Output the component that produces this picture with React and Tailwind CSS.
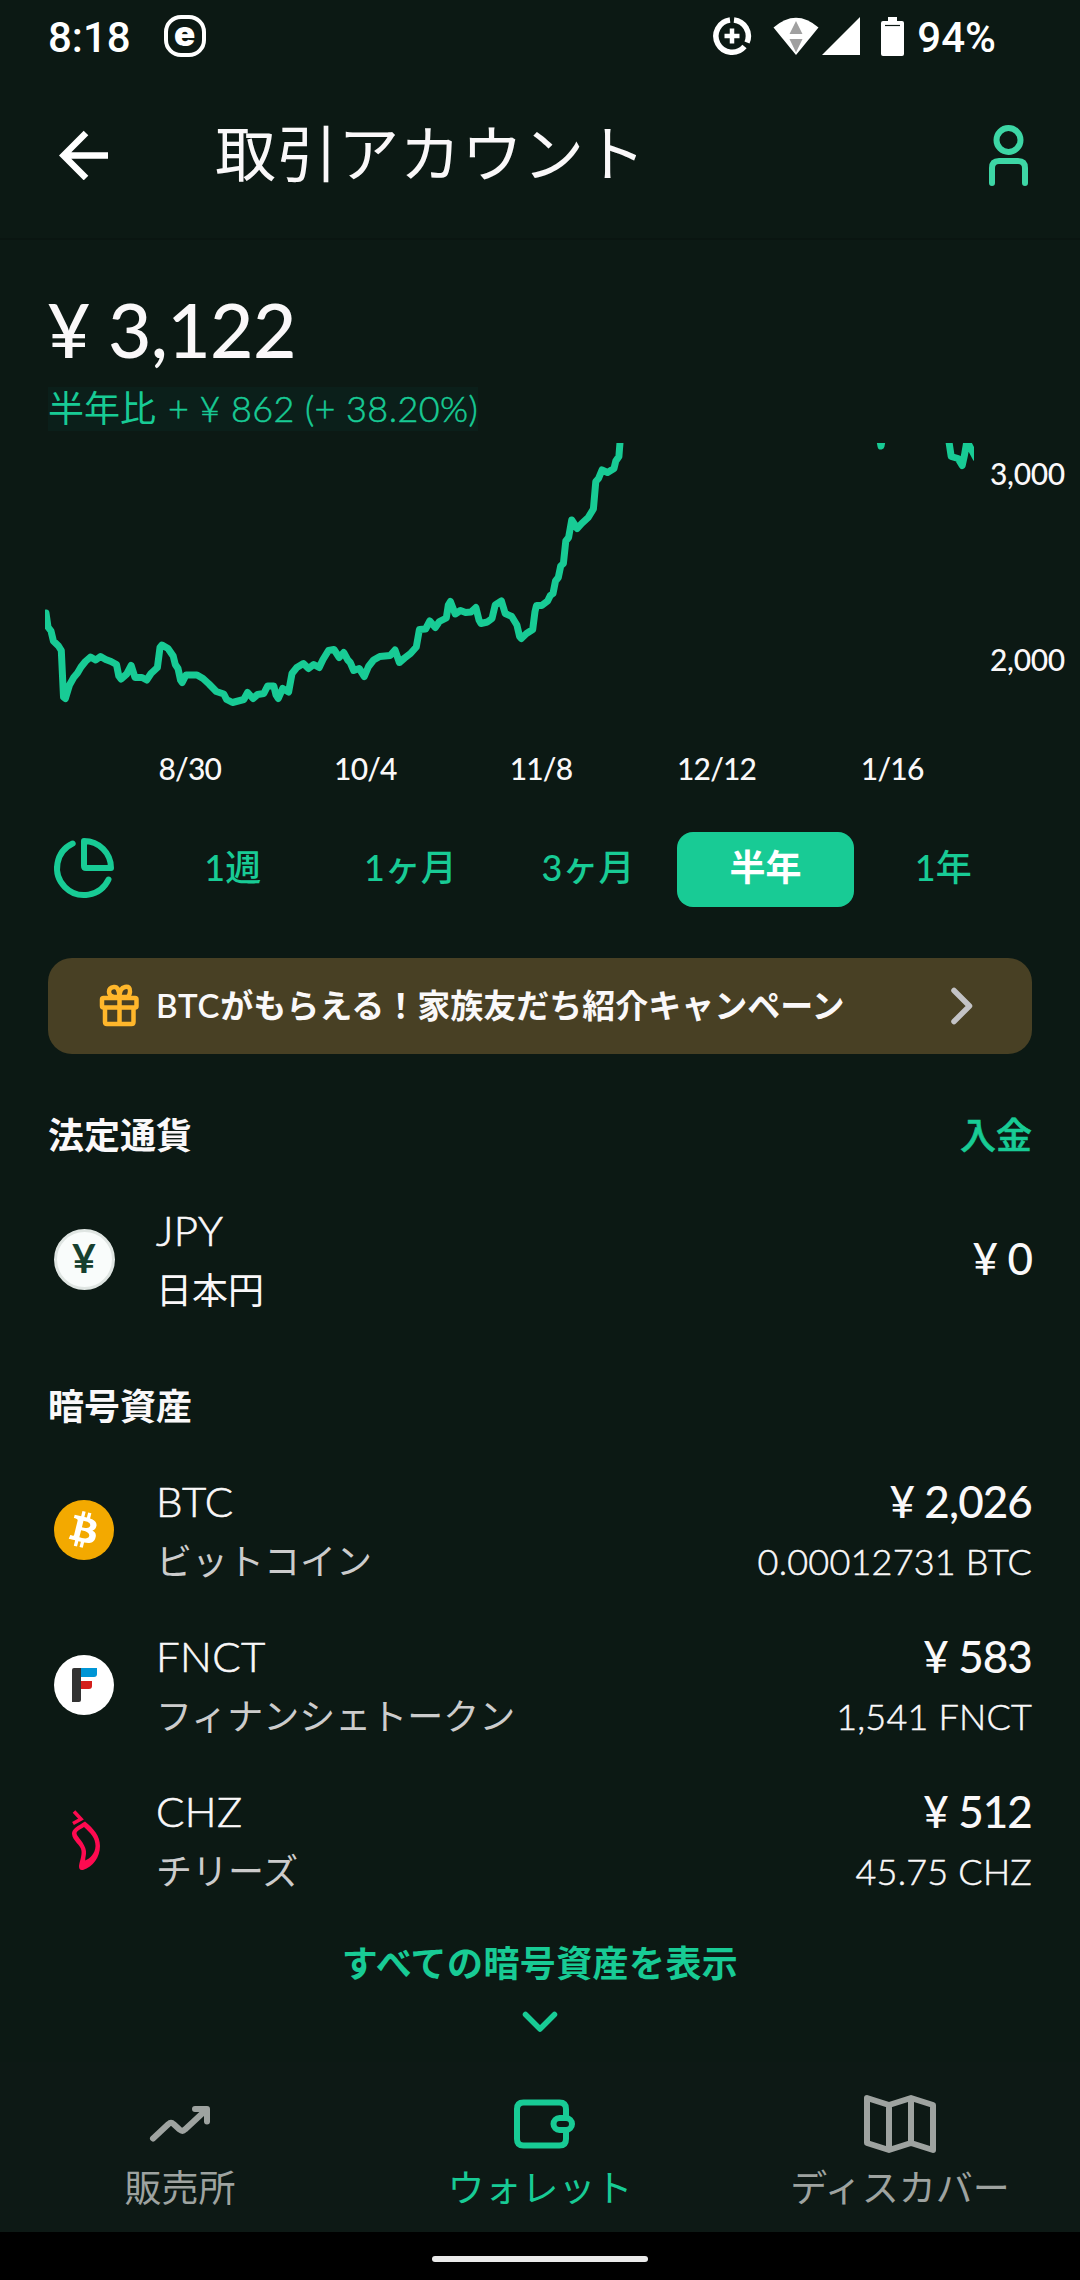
import { FaBitcoin } from 'react-icons/fa6'

const PERIODS = ['1週', '1ヶ月', '3ヶ月', '半年', '1年']
const DATES = ['8/30', '10/4', '11/8', '12/12', '1/16']

const COINS = [
  { code: 'BTC', name: 'ビットコイン', yen: '¥ 2,026', amount: '0.00012731 BTC', icon: <BtcIcon /> },
  { code: 'FNCT', name: 'フィナンシェトークン', yen: '¥ 583', amount: '1,541 FNCT', icon: <FnctIcon /> },
  { code: 'CHZ', name: 'チリーズ', yen: '¥ 512', amount: '45.75 CHZ', icon: <ChzIcon /> },
]

const LINE = `46,613 48,627 51,631 53.4,641 58.5,646 61.3,650.5 63.5,697 65.4,698.5 69.5,685 73.7,677.5 77.5,673 81,667
85.4,661.5 90.5,657 95.7,660 100.5,656.5 105.7,659.5 111,661.5 116.5,664.5 118.8,676 121,679 126.7,674 131.2,665.5
135,677.5 142,677.5 146.7,680 151,673.5 157.4,667.5 160,647.5 162,645 168,648.5 173.2,656 175.3,664.5 178,668.5
180.5,680 182.2,682.5 186,675 197,675 203,678.5 209,684 216.3,691.5 223.8,694 226.6,699.5 232.5,702.5 243.8,699.5
247.6,692.5 253,698.5 257.6,694.5 263.8,693.5 267.6,686 273.8,686 276,695 278.2,698.5 282.7,688.5 288.6,692
292,673.5 296.8,667.5 303.4,663.5 308.5,668.5 313.7,664.5 319.2,667.5 323,659.5 328.5,650.5 334,649.5 339.2,657.5
343.7,652.5 347.8,660 350.2,662.5 353.7,670.5 359.2,668.5 364.3,676.5 368.5,666.5 373.6,660 379.8,656.5 390.2,655.5
395,650 399.4,662.5 404.6,658 410.5,653.5 416.3,647 419.4,629.5 425.6,629 429.8,621 435.3,627.5 439.4,621.5
446.3,618 448.3,605 450.4,601.5 455.2,614 460.4,610.5 465.6,612.5 471,612 475.9,607.5 479,620 481,623.5 487.3,622
492,618.5 495.2,605 501.4,601 505.2,613.5 511.7,616.5 516.9,625 519.6,636.5 521.3,638.5 526.5,633.5 532.7,629.5
535,611.5 536.5,605.5 541.7,605.5 547.6,601 550.3,595.5 553,593.5 555.5,581 558.3,577.5 560.7,566 563.4,563.5
565.8,541 568.6,537.5 571.7,520 577.2,528.5 581.7,523.5 588.2,517.5 593.4,509 595.8,481.5 598.5,478.5 602,470
607.5,472.5 614,468.5 615.8,461 618.9,456.5 620.2,440 622,420 876,420 881,446 886,420 948,420 949,442 951.2,456.5
958,458.5 962.2,465.5 964.5,455 966.5,443.5 969,445 976,458`

function BtcIcon() {
  return (
    <div className="w-[60px] h-[60px] rounded-full bg-[radial-gradient(circle,#fff_56%,#f3a900_58%)]">
      <FaBitcoin className="w-[60px] h-[60px] text-[#f3a900]" />
    </div>
  )
}

function FnctIcon() {
  return (
    <svg className="w-[60px] h-[60px]" viewBox="0 0 60 60">
      <circle cx="30" cy="30" r="30" fill="#fff" />
      <path d="M20 13h7v32q0 2-2 2h-7V15q0-2 2-2z" fill="#333" />
      <path d="M27 13h16v6q0 3-3 3H27z" fill="#0095d5" />
      <path d="M27 26h11v5q0 3-3 3h-8z" fill="#d4201c" />
    </svg>
  )
}

function ChzIcon() {
  return (
    <svg className="w-[60px] h-[70px]" viewBox="0 0 60 70">
      <path d="M20 6.5l7 7.500-8 4.500" fill="none" stroke="#ff0a50" strokeWidth="3.600" />
      <path
        d="M31 16.500C40 24 46 31 46 41c0 11-7 21-17 24-3 .500-4-1-4-4 1-6 3-10 2.500-15-.500-6-9-10-9.500-17-.300-5 6-8 13-12.500zM30 22c-4 2.500-7.500 4-7.500 6.500C23 32 31 38 32 46c.300 4-.800 6-.800 9.500 5-2 10-7 10.300-14.500.100-8-5-13-11.500-19z"
        fill="#ff0a50" fillRule="evenodd"
      />
    </svg>
  )
}

function YenIcon() {
  return (
    <div className="mt-0.5 w-[61px] h-[61px] rounded-full bg-[#f9fcfb] border-[3px] border-[#dfe5e2] flex items-center justify-center text-[41px] font-bold leading-none text-[#17402f]">
      <span className="-mt-1">¥</span>
    </div>
  )
}

function StatusBar() {
  return (
    <div className="h-[72px] flex items-center pl-12 pr-[84px] text-white font-['Roboto',sans-serif] text-[42px] leading-none font-medium">
      <span className="pt-1">8:18</span>
      <div className="ml-[33px] w-[42px] h-[42px] rounded-[17px] border-4 border-white flex items-center justify-center font-['Inter',sans-serif] font-black text-[35px]">
        <span className="-mt-1.5">e</span>
      </div>
      <svg className="ml-auto w-[40px] h-[40px]" viewBox="0 0 40 40" fill="none" stroke="#fff" strokeWidth="5.500">
        <path d="M22 4A16.200 16.200 0 0 1 35 26.500M32.500 30.500A16.200 16.200 0 1 1 18 4" />
        <path d="M20 12.500v15M12.500 20h15" strokeWidth="4.500" />
      </svg>
      <svg className="ml-[21px] w-[46px] h-[38px]" viewBox="0 0 46 38">
        <path d="M.500 10.500Q23-9 45.500 10.500L23 38z" fill="#fff" />
        <path d="M23 4l6.500 13h-13zM16.500 22h13L23 35.500z" fill="#a0a0a0" />
      </svg>
      <svg className="ml-[3px] w-[38px] h-[38px]" viewBox="0 0 38 38">
        <path d="M0 38L38 0v38z" fill="#fff" />
      </svg>
      <svg className="ml-[21px] w-[23px] h-[39px]" viewBox="0 0 23 39">
        <path d="M7 0h9v4h5q2 0 2 2v31q0 2-2 2H2q-2 0-2-2V6q0-2 2-2h5z" fill="#fff" />
        <path d="M4 8.500h15" stroke="#0c1914" strokeWidth="1.200" />
      </svg>
      <span className="ml-[13px] pt-1">94%</span>
    </div>
  )
}

function Header() {
  return (
    <div className="h-[168px] flex items-center pl-[59px] pr-[50px] border-b-2 border-[#0a1511]">
      <svg className="w-[50px] h-[50px]" viewBox="0 0 50 50" fill="none" stroke="#fff" strokeWidth="6.500">
        <path d="M49 25.500H6M27 3L4.500 25.500 27 48" />
      </svg>
      <h1 className="ml-[106px] -mt-1 text-[61px] leading-none tracking-[0.6px] font-normal">取引アカウント</h1>
      <svg className="ml-auto w-[42px] h-[64px]" viewBox="0 0 42 64" fill="none" stroke="#3dd6a5" strokeWidth="6" strokeLinecap="round">
        <circle cx="20.500" cy="17" r="12" />
        <path d="M4 60V45q0-7 7-7h19q7 0 7 7v15" />
      </svg>
    </div>
  )
}

function Chart() {
  return (
    <>
      <div className="mt-3 ml-[45px] flex">
        <svg className="w-[929px] h-[290px] shrink-0" viewBox="45 443 929 290">
          <polyline points={LINE} fill="none" stroke="#18cb95" strokeWidth="7" strokeLinejoin="round" strokeLinecap="round" />
        </svg>
        <div className="pl-4 pt-[10px] flex flex-col gap-[146px] text-[30px] leading-10 tracking-[-0.3px] font-medium">
          <span>3,000</span>
          <span>2,000</span>
        </div>
      </div>
      <div className="mt-[15px] ml-[102px] w-[878px] grid grid-cols-5 text-center text-[30px] leading-10 tracking-[-0.8px] font-medium">
        {DATES.map(d => <span key={d}>{d}</span>)}
      </div>
    </>
  )
}

function Periods() {
  return (
    <div className="mt-[44px] h-[75px] ml-[51px] flex items-center">
      <svg className="w-[66px] h-[66px] -mt-1" viewBox="51 835 66 66" fill="none" stroke="#18cb95" strokeWidth="6" strokeLinecap="round" strokeLinejoin="round">
        <path d="M72.700 843.500A27 27 0 1 0 108.500 879.500" />
        <path d="M84 841A27 27 0 0 1 111 868H86q-2 0-2-2z" />
      </svg>
      <div className="ml-[27px] w-[888px] grid grid-cols-5">
        {PERIODS.map(p => (
          <button key={p} className={`h-[75px] pb-1.5 rounded-2xl text-[36px] leading-none ${p === '半年' ? 'bg-[#18cb95] text-white font-bold' : 'text-[#18cb95] font-medium'}`}>
            {p}
          </button>
        ))}
      </div>
    </div>
  )
}

function Banner() {
  return (
    <div className="mt-[51px] mx-12 h-24 rounded-3xl bg-[#484024] flex items-center pl-[51px] pr-[58px]">
      <svg className="w-[40px] h-[44px]" viewBox="99 985 40 44" fill="none" stroke="#ffb72b" strokeWidth="4.500" strokeLinejoin="round">
        <rect x="102" y="999" width="34.500" height="9.500" rx="1.500" />
        <path d="M105 1009v14q0 2 2 2h24.500q2 0 2-2v-14M119.500 999v26" />
        <path d="M119.500 998h-5.500q-5-1-5-5.200t5-4.800 5.500 10q0-9 5.500-10t5 4.800-5 5.200z" />
      </svg>
      <span className="ml-[17px] -mt-0.5 text-[33px] leading-none font-bold">
        <span className="font-semibold tracking-[0.8px]">BTC</span>がもらえる！家族友だち紹介キャンペーン
      </span>
      <svg className="ml-auto w-[24px] h-[38px]" viewBox="0 0 24 38" fill="none" stroke="#c3c3c6" strokeWidth="5.500" strokeLinecap="round" strokeLinejoin="round">
        <path d="M4 3.500L19.500 19 4 34.500" />
      </svg>
    </div>
  )
}

function Row({ icon, code, name, yen, amount }) {
  return (
    <div className="h-[155px] flex items-center px-12">
      <div className="w-[72px] mr-9 -mt-0.5 flex justify-center">{icon}</div>
      <div className="flex flex-col">
        <span className="h-[60px] text-[42px] leading-[60px] font-light tracking-[0.4px] [-webkit-text-stroke:0.6px]">{code}</span>
        <span className={`h-[60px] text-[36px] leading-[60px] font-normal ${amount ? 'text-[#cccccc]' : ''}`}>{name}</span>
      </div>
      <div className="ml-auto flex flex-col items-end">
        <span className={`h-[60px] text-[44px] font-medium tracking-[-0.9px] ${amount ? 'leading-[60px]' : 'leading-[57px]'}`}>{yen}</span>
        {amount && (
          <span className="h-[60px] text-[36px] leading-[60px] font-light tracking-[0.2px] [-webkit-text-stroke:0.5px]">{amount}</span>
        )}
      </div>
    </div>
  )
}

function NavItem({ label, active, children }) {
  return (
    <div className={`flex flex-col items-center ${active ? 'text-[#18cb95]' : 'text-[#9ea3a0]'}`}>
      {children}
      <span className="mt-2.5 text-[37px] leading-10">{label}</span>
    </div>
  )
}

function BottomNav() {
  return (
    <nav className="h-[170px] pt-7 bg-[#0d1915] grid grid-cols-3">
      <NavItem label="販売所">
        <svg className="h-[68px] w-[80px]" viewBox="140 2090 80 68" fill="none" stroke="currentColor" strokeWidth="6" strokeLinecap="round" strokeLinejoin="round">
          <path d="M153 2138.500l15.500-14.500q2.500-2.500 5 0l6 5.500q3 2.500 5.500 0l21.500-20M195 2109h12v12.500" />
        </svg>
      </NavItem>
      <NavItem label="ウォレット" active>
        <svg className="h-[68px] w-[80px]" viewBox="500 2090 80 68" fill="none" stroke="currentColor" strokeWidth="6">
          <path d="M566 2118v-9q0-6.500-6.500-6.500h-36q-6.500 0-6.500 6.500v30q0 6.500 6.500 6.500h36q6.500 0 6.500-6.500v-9" />
          <rect x="553.500" y="2118" width="18.500" height="12" rx="6" />
        </svg>
      </NavItem>
      <NavItem label="ディスカバー">
        <svg className="h-[68px] w-[80px]" viewBox="860 2090 80 68" fill="none" stroke="currentColor" strokeWidth="6" strokeLinejoin="round">
          <path d="M867 2098l22 7 22-7 22 7v45l-22-7-22 7-22-7zM889 2105v45M911 2098v45" />
        </svg>
      </NavItem>
    </nav>
  )
}

export default function App() {
  return (
    <div className="w-[1080px] h-[2280px] overflow-hidden bg-[#0c1914] text-[#faf8f9] font-['Lato','Noto_Sans_CJK_JP',sans-serif]">
      <StatusBar />
      <Header />

      <div className="mt-[49px] ml-[47px] h-20 text-[75px] leading-20 font-medium tracking-[-0.7px]">¥ 3,122</div>
      <div className="mt-[18px] ml-12 w-[430px] h-11 bg-[#0b1f1a] text-[#18cb95] text-[36px] leading-[42px] whitespace-nowrap">
        半年比<span className="ml-3 font-light tracking-[0.4px] [-webkit-text-stroke:0.5px]">+ ¥ 862 (+ 38.20%)</span>
      </div>

      <Chart />
      <Periods />
      <Banner />

      <div className="mt-[57px] mx-12 h-12 flex justify-between text-[36px] leading-12 font-bold">
        <h2>法定通貨</h2>
        <span className="text-[#18cb95] font-medium [-webkit-text-stroke:0.6px]">入金</span>
      </div>
      <div className="mt-[23px]">
        <Row icon={<YenIcon />} code="JPY" name="日本円" yen="¥ 0" />
      </div>

      <h2 className="mt-[45px] mx-12 h-12 text-[36px] leading-12 font-bold">暗号資産</h2>
      <div className="mt-[23px]">
        {COINS.map(c => <Row key={c.code} {...c} />)}
      </div>

      <div className="mt-[23px] h-[121px] flex flex-col items-center text-[#18cb95]">
        <span className="text-[36px] leading-11 font-bold tracking-[0.4px]">すべての暗号資産を表示</span>
        <svg className="mt-[26px] w-[36px] h-[22px]" viewBox="0 0 36 22" fill="none" stroke="currentColor" strokeWidth="5.500" strokeLinecap="round" strokeLinejoin="round">
          <path d="M3.500 3.500L18 18 32.500 3.500" />
        </svg>
      </div>

      <BottomNav />
      <div className="h-12 bg-black pt-6">
        <div className="mx-auto w-[216px] h-1.5 rounded-full bg-[#eaeaea]" />
      </div>
    </div>
  )
}
